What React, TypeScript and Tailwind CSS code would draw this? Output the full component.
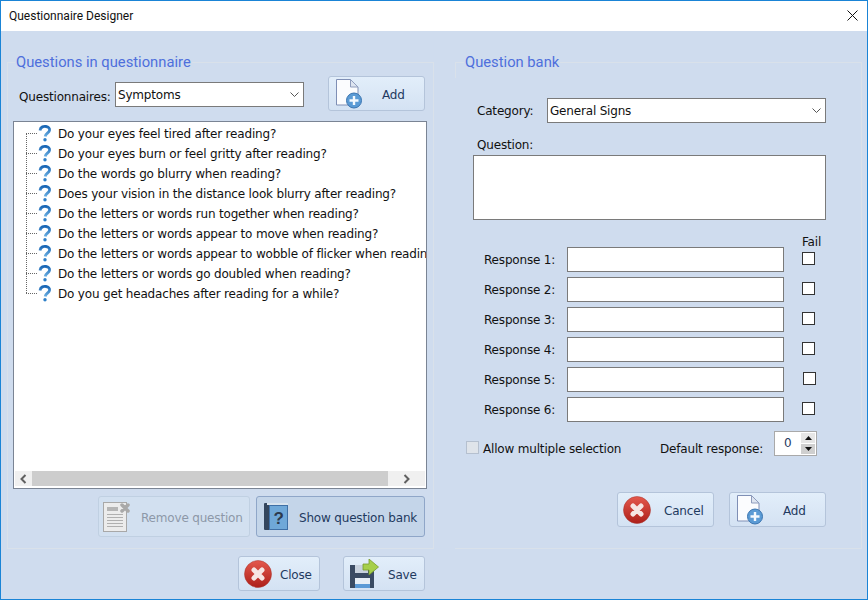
import React from "react";

const questions = [
    "Do your eyes feel tired after reading?",
    "Do your eyes burn or feel gritty after reading?",
    "Do the words go blurry when reading?",
    "Does your vision in the distance look blurry after reading?",
    "Do the letters or words run together when reading?",
    "Do the letters or words appear to move when reading?",
    "Do the letters or words appear to wobble of flicker when reading?",
    "Do the letters or words go doubled when reading?",
    "Do you get headaches after reading for a while?",
];

const responses = [1, 2, 3, 4, 5, 6];

function AddIcon() {
    return (
        <svg width="26" height="30" viewBox="0 0 26 30" className="shrink-0">
            <path d="M.5.5h14l7.500 7.500v18H.5z" fill="#fbfcfe" stroke="#7f8fb5" />
            <path d="M14.500.5v7.500H22z" fill="#dde4f0" stroke="#8f9dbd" />
            <circle cx="18" cy="21.500" r="7.500" fill="#5b9bd5" stroke="#3a74b0" />
            <path d="M18 17v9M13.500 21.500h9" stroke="#f4f9fe" strokeWidth="2.400" />
        </svg>
    );
}

function CloseIcon() {
    return (
        <svg width="28" height="28" viewBox="0 0 28 28" className="shrink-0">
            <defs>
                <linearGradient id="red" x1="0" y1="0" x2="0" y2="1">
                    <stop offset="0" stopColor="#e4594d" />
                    <stop offset="1" stopColor="#ad1f19" />
                </linearGradient>
            </defs>
            <circle cx="14" cy="14" r="13.500" fill="url(#red)" stroke="#a8322a" strokeWidth="0.500" />
            <path d="M10 10l8 8M18 10l-8 8" stroke="#f6e6e3" strokeWidth="5" strokeLinecap="round" />
        </svg>
    );
}

function QuestionIcon() {
    return (
        <svg width="16" height="18" viewBox="0 0 16 18" className="shrink-0">
            <defs>
                <linearGradient id="q" x1="0" y1="0" x2="0" y2="1">
                    <stop offset="0" stopColor="#1a67b5" />
                    <stop offset="1" stopColor="#6bb0e2" />
                </linearGradient>
            </defs>
            <path d="M3 6.500C3.500 2.500 7 2.200 9 2.500c2.500.4 4 2 3.500 4-.5 2.500-4 3-4.300 6" fill="none" stroke="url(#q)" strokeWidth="2.800" />
            <circle cx="8" cy="15.700" r="1.700" fill="#2f80c8" />
        </svg>
    );
}

function BookIcon() {
    return (
        <svg width="24" height="27" viewBox="0 0 24 27" className="shrink-0">
            <rect x="0" y="0" width="6" height="27" fill="#34465e" rx="1" />
            <rect x="5.500" y="2.500" width="18" height="24" fill="#6fa8d8" stroke="#3f70a6" />
            <rect x="3" y="0" width="21" height="2" fill="#d9e4ee" />
            <text x="14.500" y="20.500" textAnchor="middle" fontSize="17" fontWeight="700" fontFamily="Liberation Sans" fill="#2b3a4e">?</text>
        </svg>
    );
}

function RemoveIcon() {
    return (
        <svg width="28" height="30" viewBox="0 0 28 30" className="shrink-0">
            <rect x=".5" y=".5" width="23" height="29" fill="#ececec" stroke="#a8a8a8" />
            <rect x="4" y="5" width="11" height="4" fill="#b5b5b5" />
            <path d="M4 12.500h16M4 15.500h16M4 18.500h16M4 21.500h16M4 24.500h16" stroke="#b0b0b0" />
            <path d="M19 3l6 6M25 3l-6 6" stroke="#a9a9a9" strokeWidth="3.500" strokeLinecap="round" />
        </svg>
    );
}

function SaveIcon() {
    return (
        <svg width="29" height="30" viewBox="0 0 29 30" className="shrink-0">
            <path d="M0 6h24v23H0z" fill="#3a4b63" />
            <rect x="5" y="6" width="13" height="8" fill="#c8d2de" />
            <rect x="5" y="19" width="15" height="10" fill="#e6eef6" />
            <rect x="5" y="25" width="15" height="4" fill="#5b9ad6" />
            <path d="M13 5h6V0l9.500 8-9.500 8v-5h-6z" fill="#a6cf4a" stroke="#789c2c" strokeWidth="0.800" />
        </svg>
    );
}

function Chevron() {
    return (
        <svg width="9" height="5" viewBox="0 0 9 5" className="shrink-0">
            <path d="M.5.5l4 4 4-4" fill="none" stroke="#555" />
        </svg>
    );
}

function ActionButton({ icon, label, className, labelClass }: { icon: React.ReactNode; label: string; className: string; labelClass: string }) {
    return (
        <button className={"flex items-center rounded-[3px] border shrink-0 " + className}>
            {icon}
            <span className={"whitespace-nowrap mt-[2px] " + labelClass}>{label}</span>
        </button>
    );
}

const normalBtn = "border-[#b4c4da] bg-gradient-to-b from-[#e2eefa] to-[#d4e2f3] text-[#1f3a5f]";

export default function App() {
    return (
        <div className="w-[868px] h-[600px] flex flex-col border border-[#1a84d6] bg-[#cfdcee] text-[12px] leading-[16px] tracking-[-0.18px] text-[#111] overflow-hidden font-['DejaVu_Sans',sans-serif]">
            <div className="h-[30px] shrink-0 bg-white flex items-center justify-between pl-2 pr-[9px] tracking-normal font-['Roboto',sans-serif]">
                <span>Questionnaire Designer</span>
                <svg width="11" height="11" viewBox="0 0 11 11" className="mb-px">
                    <path d="M.5.5l10 10M10.500.5l-10 10" stroke="#111" />
                </svg>
            </div>
            <div className="flex-1 flex pl-[6px] pr-[5px] gap-[21px]">
                <div className="w-[427px]">
                    <div className="mt-[31px] h-[487px] border border-[#d9e1ea] px-[5px] flex flex-col">
                        <h2 className="-mt-[10px] ml-[2px] px-px w-fit bg-[#cfdcee] text-[14.75px] leading-[18px] tracking-normal text-[#4e6fdc] font-['Roboto',sans-serif]">Questions in questionnaire</h2>
                        <div className="flex items-start mt-[5px] h-[35px]">
                            <span className="ml-[6px] mt-[13px] w-[90px] whitespace-nowrap">Questionnaires:</span>
                            <div className="ml-[6px] mt-[6px] w-[189px] h-[25px] border border-[#7a7a7a] bg-white flex items-center justify-between pl-[2px] pr-[4px]">
                                <span>Symptoms</span>
                                <Chevron />
                            </div>
                            <ActionButton icon={<AddIcon />} label="Add" className={"ml-[24px] w-[97px] h-[35px] pl-[7px] " + normalBtn} labelClass="ml-[20px]" />
                        </div>
                        <div className="mt-[10px] h-[368px] w-[414px] shrink-0 border border-[#7a8494] bg-white flex flex-col">
                            <div className="relative flex-1 overflow-hidden pl-[12px] pt-[1px]">
                                <div className="absolute left-[12px] top-[11px] h-[160px] border-l border-dotted border-[#666]" />
                                {questions.map((q) => (
                                    <div key={q} className="h-[20px] flex items-center whitespace-nowrap">
                                        <span className="w-[11px] border-t border-dotted border-[#666] shrink-0" />
                                        <QuestionIcon />
                                        <span className="ml-[5px] mt-[2px]">{q}</span>
                                    </div>
                                ))}
                            </div>
                            <div className="h-[15px] mx-px mb-[2px] bg-[#f0f0f0] flex items-center">
                                <span className="w-[17px] flex justify-center"><svg width="7" height="10" viewBox="0 0 7 10"><path d="M5.500 1L1.500 5l4 4" fill="none" stroke="#606060" strokeWidth="2" /></svg></span>
                                <div className="w-[356px] h-full bg-[#cdcdcd]" />
                                <span className="flex-1 flex justify-center"><svg width="7" height="10" viewBox="0 0 7 10"><path d="M1.500 1l4 4-4 4" fill="none" stroke="#606060" strokeWidth="2" /></svg></span>
                            </div>
                        </div>
                        <div className="flex justify-end gap-[6px] mt-[7px] pr-[3px]">
                            <ActionButton icon={<RemoveIcon />} label="Remove question" className="w-[152px] h-[41px] pl-[4px] border-[#c0d0e2] bg-[#d2e0f0]" labelClass="ml-[10px] text-[#8d98a8]" />
                            <ActionButton icon={<BookIcon />} label="Show question bank" className="w-[169px] h-[41px] pl-[7px] border-[#8fa6c8] bg-[#c4d5e9] text-[#1f3a5f]" labelClass="ml-[11px]" />
                        </div>
                    </div>
                    <div className="flex justify-end gap-[23px] mt-[7px] pr-[9px]">
                        <ActionButton icon={<CloseIcon />} label="Close" className={"w-[82px] h-[35px] pl-[5px] " + normalBtn} labelClass="ml-[8px]" />
                        <ActionButton icon={<SaveIcon />} label="Save" className={"w-[82px] h-[35px] pl-[6px] " + normalBtn} labelClass="ml-[9px]" />
                    </div>
                </div>
                <div className="flex-1">
                    <div className="relative mt-[31px] h-[487px] border-t border-r border-b border-[#d9e1ea] flex flex-col">
                        <div className="absolute left-0 top-0 h-[15px] w-px bg-[#d9e1ea]" />
                        <h2 className="relative -mt-[10px] ml-[9px] px-px w-fit bg-[#cfdcee] text-[14.75px] leading-[18px] tracking-normal text-[#4e6fdc] font-['Roboto',sans-serif]">Question bank</h2>
                        <div className="flex items-center mt-[27px] ml-[22px]">
                            <span className="w-[70px]">Category:</span>
                            <div className="w-[279px] h-[25px] border border-[#7a7a7a] bg-white flex items-center justify-between pl-[2px] pr-[4px]">
                                <span>General Signs</span>
                                <Chevron />
                            </div>
                        </div>
                        <span className="ml-[22px] mt-[14px]">Question:</span>
                        <div className="ml-[18px] mt-[2px] w-[353px] h-[65px] shrink-0 border border-[#7a7a7a] bg-white" />
                        <div className="ml-[347px] mt-[15px] leading-[14px]">Fail</div>
                        <div className="flex flex-col gap-[5px] -mt-[2px]">
                            {responses.map((n) => (
                                <div key={n} className="flex items-center h-[25px] ml-[29px]">
                                    <span className="w-[83px]">Response {n}:</span>
                                    <div className="w-[217px] h-[25px] border border-[#7a7a7a] bg-white" />
                                    <span className={"w-[13px] h-[13px] mb-[2px] border border-[#333] bg-white " + (n === 5 ? "ml-[19px]" : "ml-[18px]")} />
                                </div>
                            ))}
                        </div>
                        <div className="flex items-end mt-[9px] ml-[11px]">
                            <span className="w-[13px] h-[13px] mb-[2px] border border-[#b5c0cf] bg-[#dfe4ea]" />
                            <span className="ml-[4px] w-[177px] -mb-px">Allow multiple selection</span>
                            <span className="w-[114px] -mb-px">Default response:</span>
                            <div className="w-[43px] h-[25px] border border-[#a9a9a9] bg-white flex justify-between">
                                <span className="ml-[9px] mt-[3px] text-[#1f3a5f]">0</span>
                                <div className="flex flex-col w-[14px] gap-px m-px">
                                    <span className="flex-1 bg-[#e6e6e6] flex items-center justify-center"><svg width="7" height="4" viewBox="0 0 7 4"><path d="M3.500 0L7 4H0z" fill="#111" /></svg></span>
                                    <span className="flex-1 bg-[#cfcfcf] flex items-center justify-center"><svg width="7" height="4" viewBox="0 0 7 4"><path d="M0 0h7L3.500 4z" fill="#111" /></svg></span>
                                </div>
                            </div>
                        </div>
                        <div className="flex gap-[15px] mt-[36px] ml-[162px]">
                            <ActionButton icon={<CloseIcon />} label="Cancel" className={"w-[97px] h-[35px] pl-[5px] " + normalBtn} labelClass="ml-[13px]" />
                            <ActionButton icon={<AddIcon />} label="Add" className={"w-[97px] h-[35px] pl-[7px] " + normalBtn} labelClass="ml-[20px]" />
                        </div>
                    </div>
                </div>
            </div>
        </div>
    );
}
